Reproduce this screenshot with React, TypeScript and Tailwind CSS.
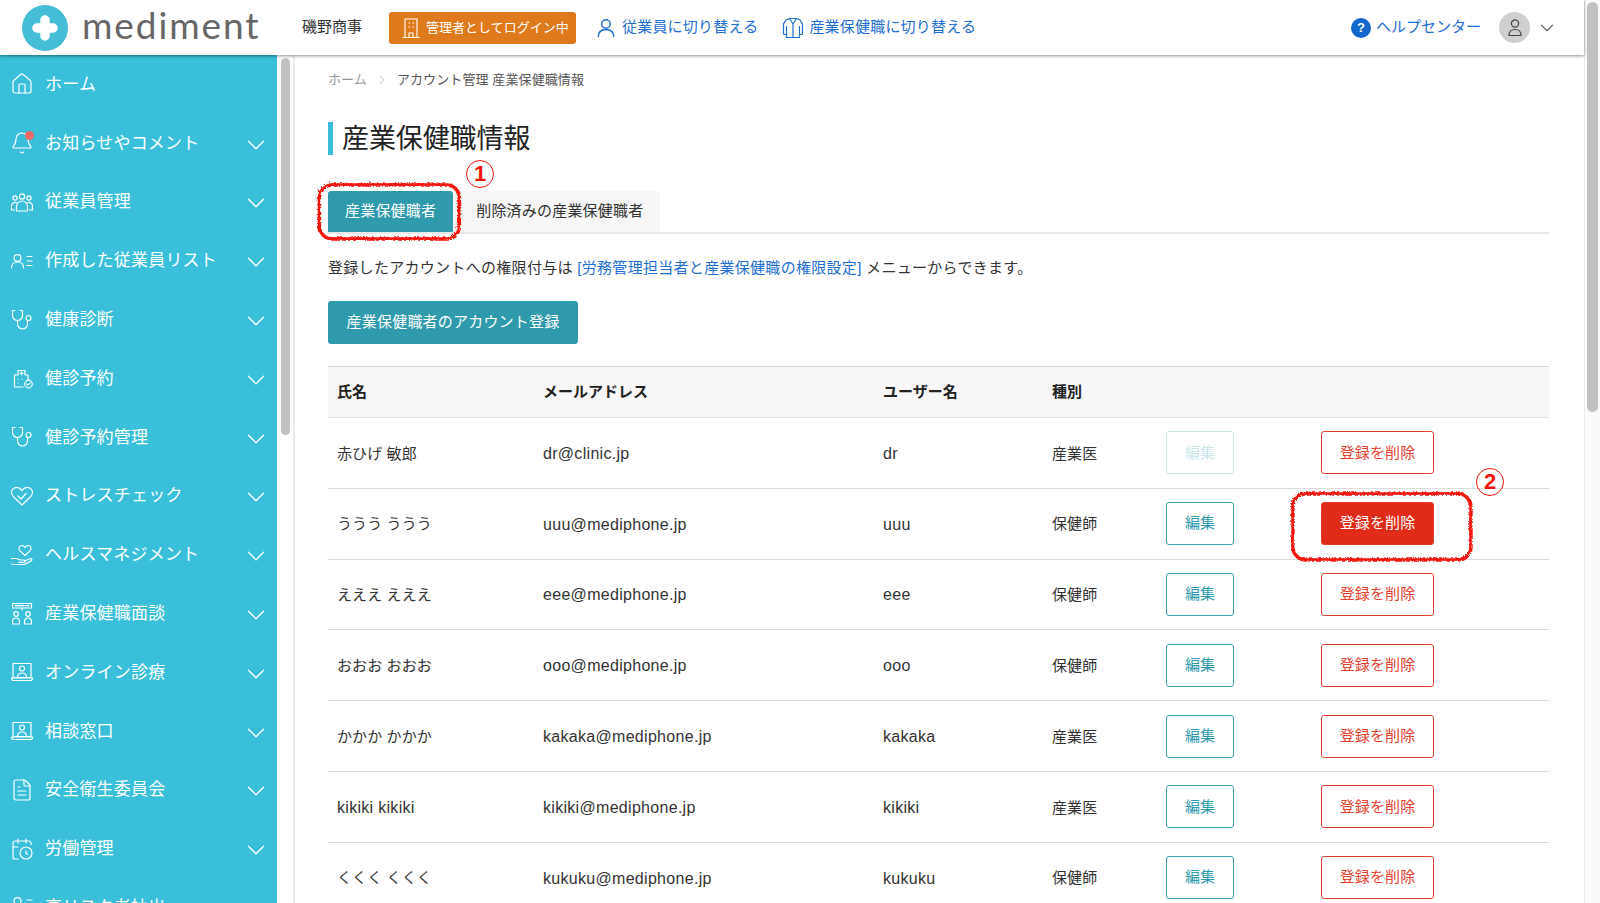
import { Bell, CalendarClock, ChevronDown, ChevronRight, FileText, House } from "lucide-react";
import type { ReactNode } from "react";

const FONT = '"Liberation Sans", "Noto Sans CJK JP", sans-serif';

const Svg = ({ children }: { children: ReactNode }) => (
  <svg width="24" height="24" viewBox="0 0 24 24" fill="none" stroke="currentColor" strokeWidth="1.2" strokeLinecap="round" strokeLinejoin="round">
    {children}
  </svg>
);

const UsersIcon = () => (
  <Svg>
    <circle cx="12" cy="6.5" r="2.6" />
    <circle cx="5" cy="8" r="2.1" />
    <circle cx="19" cy="8" r="2.1" />
    <path d="M6.5 21v-4.5a5.5 5.5 0 0 1 11 0V21z" />
    <path d="M4.5 20H1.5v-4.2a3.4 3.4 0 0 1 4.8-3" />
    <path d="M19.5 20h3v-4.2a3.4 3.4 0 0 0-4.8-3" />
  </Svg>
);

const ListIcon = () => (
  <Svg>
    <circle cx="7.5" cy="9" r="3.4" />
    <path d="M1.5 19c0-4 2.6-6 6-6s6 2 6 6" />
    <path d="M17 7.5h5M17 12h5M17 16.5h5" />
  </Svg>
);

const ScopeIcon = () => (
  <Svg>
    <path d="M5 2.500H2.500v5a5 5 0 0 0 10 0v-5H10" />
    <path d="M7.500 12.500V16a5 5 0 0 0 10 0v-3.500" />
    <circle cx="18.500" cy="10" r="2.500" />
  </Svg>
);

const ClinicIcon = () => (
  <Svg>
    <path d="M5 9h3V4.5h7V9h3v5M13 21H4.5V9" />
    <path d="M11.5 5.8v3M10 7.3h3M8 13v.1M8 17v.1M12 13v.1" />
    <circle cx="18.5" cy="18" r="3.8" />
    <path d="M16.8 18l1.2 1.2 2.2-2.3" />
  </Svg>
);

const HeartCheckIcon = () => (
  <Svg>
    <path d="M12 21 3 12.2C.4 9.4 1.3 5.4 4.3 4s5.6-.1 7.7 2.5C14.100 3.900 16.700 2.600 19.700 4s3.900 5.400 1.300 8.200z" />
    <path d="m8 12 3 3 5-5.500" />
  </Svg>
);

const HandIcon = () => (
  <Svg>
    <path d="M15 12.500 9.800 7.600C8 5.700 9.300 2.500 11.800 2.500c1.300 0 2.400.8 3.200 2 .8-1.200 1.900-2 3.200-2 2.500 0 3.800 3.200 2 5.100z" />
    <path d="M1.500 15.500h5l4 1.500h3.500c1.500 0 1.500 2.300 0 2.300H9" />
    <path d="m14.500 18 5.500-2.300c1.800-.6 2.700 1.200 1.200 2.200L14.500 21.500H5L1.500 21" />
  </Svg>
);

const MeetingIcon = () => (
  <Svg>
    <rect x="2.500" y="1.500" width="19" height="4.500" />
    <path d="M5 3.700h14M12 6v2" />
    <circle cx="6" cy="12" r="2.300" />
    <circle cx="18" cy="12" r="2.300" />
    <path d="M2.500 22v-2.500a3.500 3.500 0 0 1 7 0V22zM14.500 22v-2.500a3.500 3.500 0 0 1 7 0V22z" />
  </Svg>
);

const LaptopIcon = () => (
  <Svg>
    <rect x="3" y="3.500" width="18" height="14" />
    <circle cx="12" cy="8.500" r="2.500" />
    <path d="M7.500 17.500c0-3 2-4.500 4.500-4.500s4.500 1.500 4.500 4.500M1.500 18h21c0 1.500-.8 2.500-2 2.500h-17c-1.200 0-2-1-2-2.500z" />
  </Svg>
);

const RiskIcon = () => (
  <Svg>
    <circle cx="7.500" cy="5" r="3.400" />
    <path d="M1.500 15c0-4 2.600-6 6-6s6 2 6 6M17 4h5" />
  </Svg>
);

const lucideProps = { size: 24, strokeWidth: 1.2 };

const MENU: { label: string; icon: ReactNode; arrow?: boolean }[] = [
  { label: "ホーム", icon: <House {...lucideProps} />, arrow: false },
  {
    label: "お知らせやコメント",
    icon: (
      <span className="relative block h-6 w-6">
        <Bell {...lucideProps} />
        <span className="absolute right-0 top-0 h-[9px] w-[9px] rounded-full bg-[#ee6a66]" />
      </span>
    ),
  },
  { label: "従業員管理", icon: <UsersIcon /> },
  { label: "作成した従業員リスト", icon: <ListIcon /> },
  { label: "健康診断", icon: <ScopeIcon /> },
  { label: "健診予約", icon: <ClinicIcon /> },
  { label: "健診予約管理", icon: <ScopeIcon /> },
  { label: "ストレスチェック", icon: <HeartCheckIcon /> },
  { label: "ヘルスマネジメント", icon: <HandIcon /> },
  { label: "産業保健職面談", icon: <MeetingIcon /> },
  { label: "オンライン診療", icon: <LaptopIcon /> },
  { label: "相談窓口", icon: <LaptopIcon /> },
  { label: "安全衛生委員会", icon: <FileText {...lucideProps} /> },
  { label: "労働管理", icon: <CalendarClock {...lucideProps} /> },
  { label: "高リスク者抽出", icon: <RiskIcon /> },
];

const ROWS = [
  { name: "赤ひげ 敏郎", email: "dr@clinic.jp", user: "dr", kind: "産業医", disabled: true },
  { name: "ううう ううう", email: "uuu@mediphone.jp", user: "uuu", kind: "保健師", hover: true },
  { name: "えええ えええ", email: "eee@mediphone.jp", user: "eee", kind: "保健師" },
  { name: "おおお おおお", email: "ooo@mediphone.jp", user: "ooo", kind: "保健師" },
  { name: "かかか かかか", email: "kakaka@mediphone.jp", user: "kakaka", kind: "産業医" },
  { name: "kikiki kikiki", email: "kikiki@mediphone.jp", user: "kikiki", kind: "産業医", latin: true },
  { name: "くくく くくく", email: "kukuku@mediphone.jp", user: "kukuku", kind: "保健師" },
];

const GRID = "grid grid-cols-[206px_340px_170px_115px_154px_1fr] items-center";

const Logo = () => (
  <div className="flex w-[284px] items-center pl-[22px]">
    <svg width="46" height="46" viewBox="0 0 46 46">
      <circle cx="23" cy="23" r="23" fill="#45bdd6" />
      <path d="M23 15v16M15 23h16" stroke="#fff" strokeWidth="9.500" strokeLinecap="round" />
    </svg>
    <span className="mb-[6px] ml-[14px] font-['Lato'] text-[37px] leading-none tracking-[1.9px] text-[#666]">mediment</span>
  </div>
);

const Header = () => (
  <header className="relative z-10 flex h-[55px] shrink-0 items-center bg-white pr-[26px] shadow-[0_1px_3px_rgba(0,0,0,0.45)]">
    <Logo />
    <span className="ml-[18px] text-[15px] text-[#333]">磯野商事</span>
    <div className="ml-[27px] flex h-8 w-[187px] items-center rounded-[3px] bg-[#df7a1c] pl-[11px] text-[13px] text-white">
      <svg width="22" height="22" viewBox="0 0 22 22" fill="none" stroke="#fff" strokeWidth="1.100">
        <path d="M5 20V2h12v18M2.500 20.500h17M9 20v-4h4v4M8.500 6h1.500M12.500 6H14M8.500 10h1.500M12.500 10H14" />
      </svg>
      <span className="ml-[4px]">管理者としてログイン中</span>
    </div>
    <div className="ml-[21px] flex items-center text-[15px] tracking-[0.2px] text-[#1f6fd0]">
      <svg width="18" height="20" viewBox="0 0 18 20" fill="none" stroke="currentColor" strokeWidth="1.400">
        <circle cx="9" cy="6" r="4.300" />
        <path d="M1.200 19c0-5 3.300-7.500 7.800-7.500s7.800 2.500 7.800 7.500" />
      </svg>
      <span className="ml-[7px]">従業員に切り替える</span>
      <svg className="ml-[24px]" width="22" height="22" viewBox="0 0 22 22" fill="none" stroke="currentColor" strokeWidth="1.200">
        <path d="M7.500 1.500 4 3 1.500 7v10l3 .8V9M14.500 1.500 18 3l2.500 4v10l-3 .8V9M7.500 1.500 11 7l3.500-5.500M4.500 17v3.500h13V17M11 7v13.500M7.500 1.500h7" />
      </svg>
      <span className="ml-[5px]">産業保健職に切り替える</span>
    </div>
    <div className="ml-auto flex items-center text-[15px] text-[#1f6fd0]">
      <span className="flex h-5 w-5 items-center justify-center rounded-full bg-[#1266cc] text-[13px] font-bold text-white">?</span>
      <span className="ml-[5px]">ヘルプセンター</span>
    </div>
    <div className="ml-[18px] flex h-[31px] w-[31px] items-center justify-center rounded-full bg-[#cfcfcf]">
      <svg width="16" height="20" viewBox="0 0 16 20" fill="none" stroke="#444" strokeWidth="1.200">
        <circle cx="8" cy="5.500" r="3.600" />
        <path d="M2 17.500c0-4 2.500-6 6-6s6 2 6 6z" />
      </svg>
    </div>
    <ChevronDown className="ml-[6px] text-[#666]" size={22} strokeWidth={1.2} />
  </header>
);

const Sidebar = () => (
  <aside className="h-full w-[277px] shrink-0 overflow-hidden bg-[#39bfd9] text-white">
    {MENU.map((item) => (
      <div key={item.label} className="flex h-[58.8px] items-center pl-[10px] pr-[6px]">
        <span className="flex w-6 shrink-0 justify-center">{item.icon}</span>
        <span className="ml-[11px] flex-1 text-[17px] leading-none tracking-[0.2px]">{item.label}</span>
        {item.arrow !== false && <ChevronDown className="mt-[3px]" size={30} strokeWidth={1.15} />}
      </div>
    ))}
  </aside>
);

const DataRow = ({ row }: { row: (typeof ROWS)[number] }) => (
  <div className={`${GRID} h-[70.8px] border-b border-[#dcdcdc] pt-[2px] text-[#333]`}>
    <span className={`pl-[9px] ${row.latin ? "text-[16px] tracking-[0.3px]" : "text-[15px] tracking-[0.1px]"}`}>{row.name}</span>
    <span className="pl-[9px] text-[16px] tracking-[0.3px]">{row.email}</span>
    <span className="pl-[9px] text-[16px] tracking-[0.3px]">{row.user}</span>
    <span className="pl-[8px] text-[15px] tracking-[0.1px]">{row.kind}</span>
    <div className="mb-[2px] pl-[7px]">
      <button className={`h-[43px] w-[68px] rounded-[3px] border border-[#3ea0b0] text-[15px] tracking-[0.1px] text-[#2f9aab] ${row.disabled ? "opacity-25" : ""}`}>編集</button>
    </div>
    <div className="mb-[2px] pl-[8px]">
      <button className={`h-[43px] w-[113px] rounded-[3px] border border-[#e2402f] text-[15px] tracking-[0.1px] ${row.hover ? "bg-[#e02b19] text-white" : "text-[#e5432f]"}`}>登録を削除</button>
    </div>
  </div>
);

const Main = () => (
  <main className="min-w-0 flex-1 overflow-hidden border-l-2 border-[#ececec] pl-[33px] pr-[35px] pt-[15px] text-[#333]">
    <div className="flex h-5 items-center text-[13px] tracking-[0.1px]">
      <span className="text-[#999]">ホーム</span>
      <ChevronRight className="mx-[8px] text-[#aaa]" size={14} strokeWidth={1.3} />
      <span className="text-[#555]">アカウント管理 産業保健職情報</span>
    </div>
    <h1 className="mt-[32px] flex h-[33px] items-center border-l-[5px] border-[#39bfd9] pl-[9px] pt-[1px] text-[27px] font-normal tracking-[-0.1px] text-[#222]">産業保健職情報</h1>
    <div className="mt-[36px] flex border-b-2 border-[#e8e8e8] text-[15px] tracking-[0.2px]">
      <div className="flex h-[41px] items-center rounded-t-[3px] bg-[#2f9aab] px-[17px] text-white">産業保健職者</div>
      <div className="flex h-[41px] items-center rounded-t-[3px] bg-[#f6f6f6] pl-[23px] pr-[17px]">削除済みの産業保健職者</div>
    </div>
    <p className="mt-[24px] h-5 text-[15px] leading-5 tracking-[0.3px]">
      登録したアカウントへの権限付与は <span className="text-[#1f6fd0]">[労務管理担当者と産業保健職の権限設定]</span> メニューからできます。
    </p>
    <button className="mt-[23px] h-[43px] w-[250px] rounded-[3px] bg-[#2f9aab] text-[15px] tracking-[0.2px] text-white">産業保健職者のアカウント登録</button>
    <div className="mt-[22px]">
      <div className={`${GRID} h-[52px] border-y border-t-[#d8d8d8] border-b-[#dfe5e8] bg-[#f7f7f7] text-[15px] font-bold text-[#222]`}>
        <span className="pl-[9px]">氏名</span>
        <span className="pl-[9px]">メールアドレス</span>
        <span className="pl-[9px]">ユーザー名</span>
        <span className="pl-[8px]">種別</span>
      </div>
      {ROWS.map((row) => (
        <DataRow key={row.email} row={row} />
      ))}
    </div>
  </main>
);

// hand drawn red marks on top of the page
const Annotations = () => (
  <>
    <svg className="pointer-events-none absolute left-0 top-0" width="1600" height="903" fill="none" stroke="#f2140a" strokeWidth="3.400">
      <filter id="rough">
        <feTurbulence baseFrequency="0.35" numOctaves="2" seed="3" />
        <feDisplacementMap in="SourceGraphic" scale="2.500" />
      </filter>
      <g filter="url(#rough)">
        <rect x="318.500" y="184" width="140" height="54" rx="13" />
        <rect x="1292" y="493" width="178" height="66" rx="13" />
      </g>
    </svg>
    <span className="absolute left-[466px] top-[160px] flex h-[28px] w-[28px] items-center justify-center rounded-full border border-[#f2140a] text-[22px] font-bold leading-none text-[#f2140a]">1</span>
    <span className="absolute left-[1476px] top-[468px] flex h-[28px] w-[28px] items-center justify-center rounded-full border border-[#f2140a] text-[22px] font-bold leading-none text-[#f2140a]">2</span>
  </>
);

export default function App() {
  return (
    <div className="relative flex h-screen overflow-hidden bg-white" style={{ fontFamily: FONT }}>
      <div className="flex w-[1584px] shrink-0 flex-col">
        <Header />
        <div className="flex min-h-0 flex-1">
          <Sidebar />
          <div className="w-4 shrink-0 pl-[4px] pt-[3px]">
            <div className="h-[377px] w-[9px] rounded-full bg-[#c1c1c1]" />
          </div>
          <Main />
        </div>
      </div>
      <div className="flex-1 border-l border-[#ececec] bg-[#fafafa] pl-[2px] pt-[2px]">
        <div className="h-[410px] w-[11px] rounded-full bg-[#c1c1c1]" />
      </div>
      <Annotations />
    </div>
  );
}
